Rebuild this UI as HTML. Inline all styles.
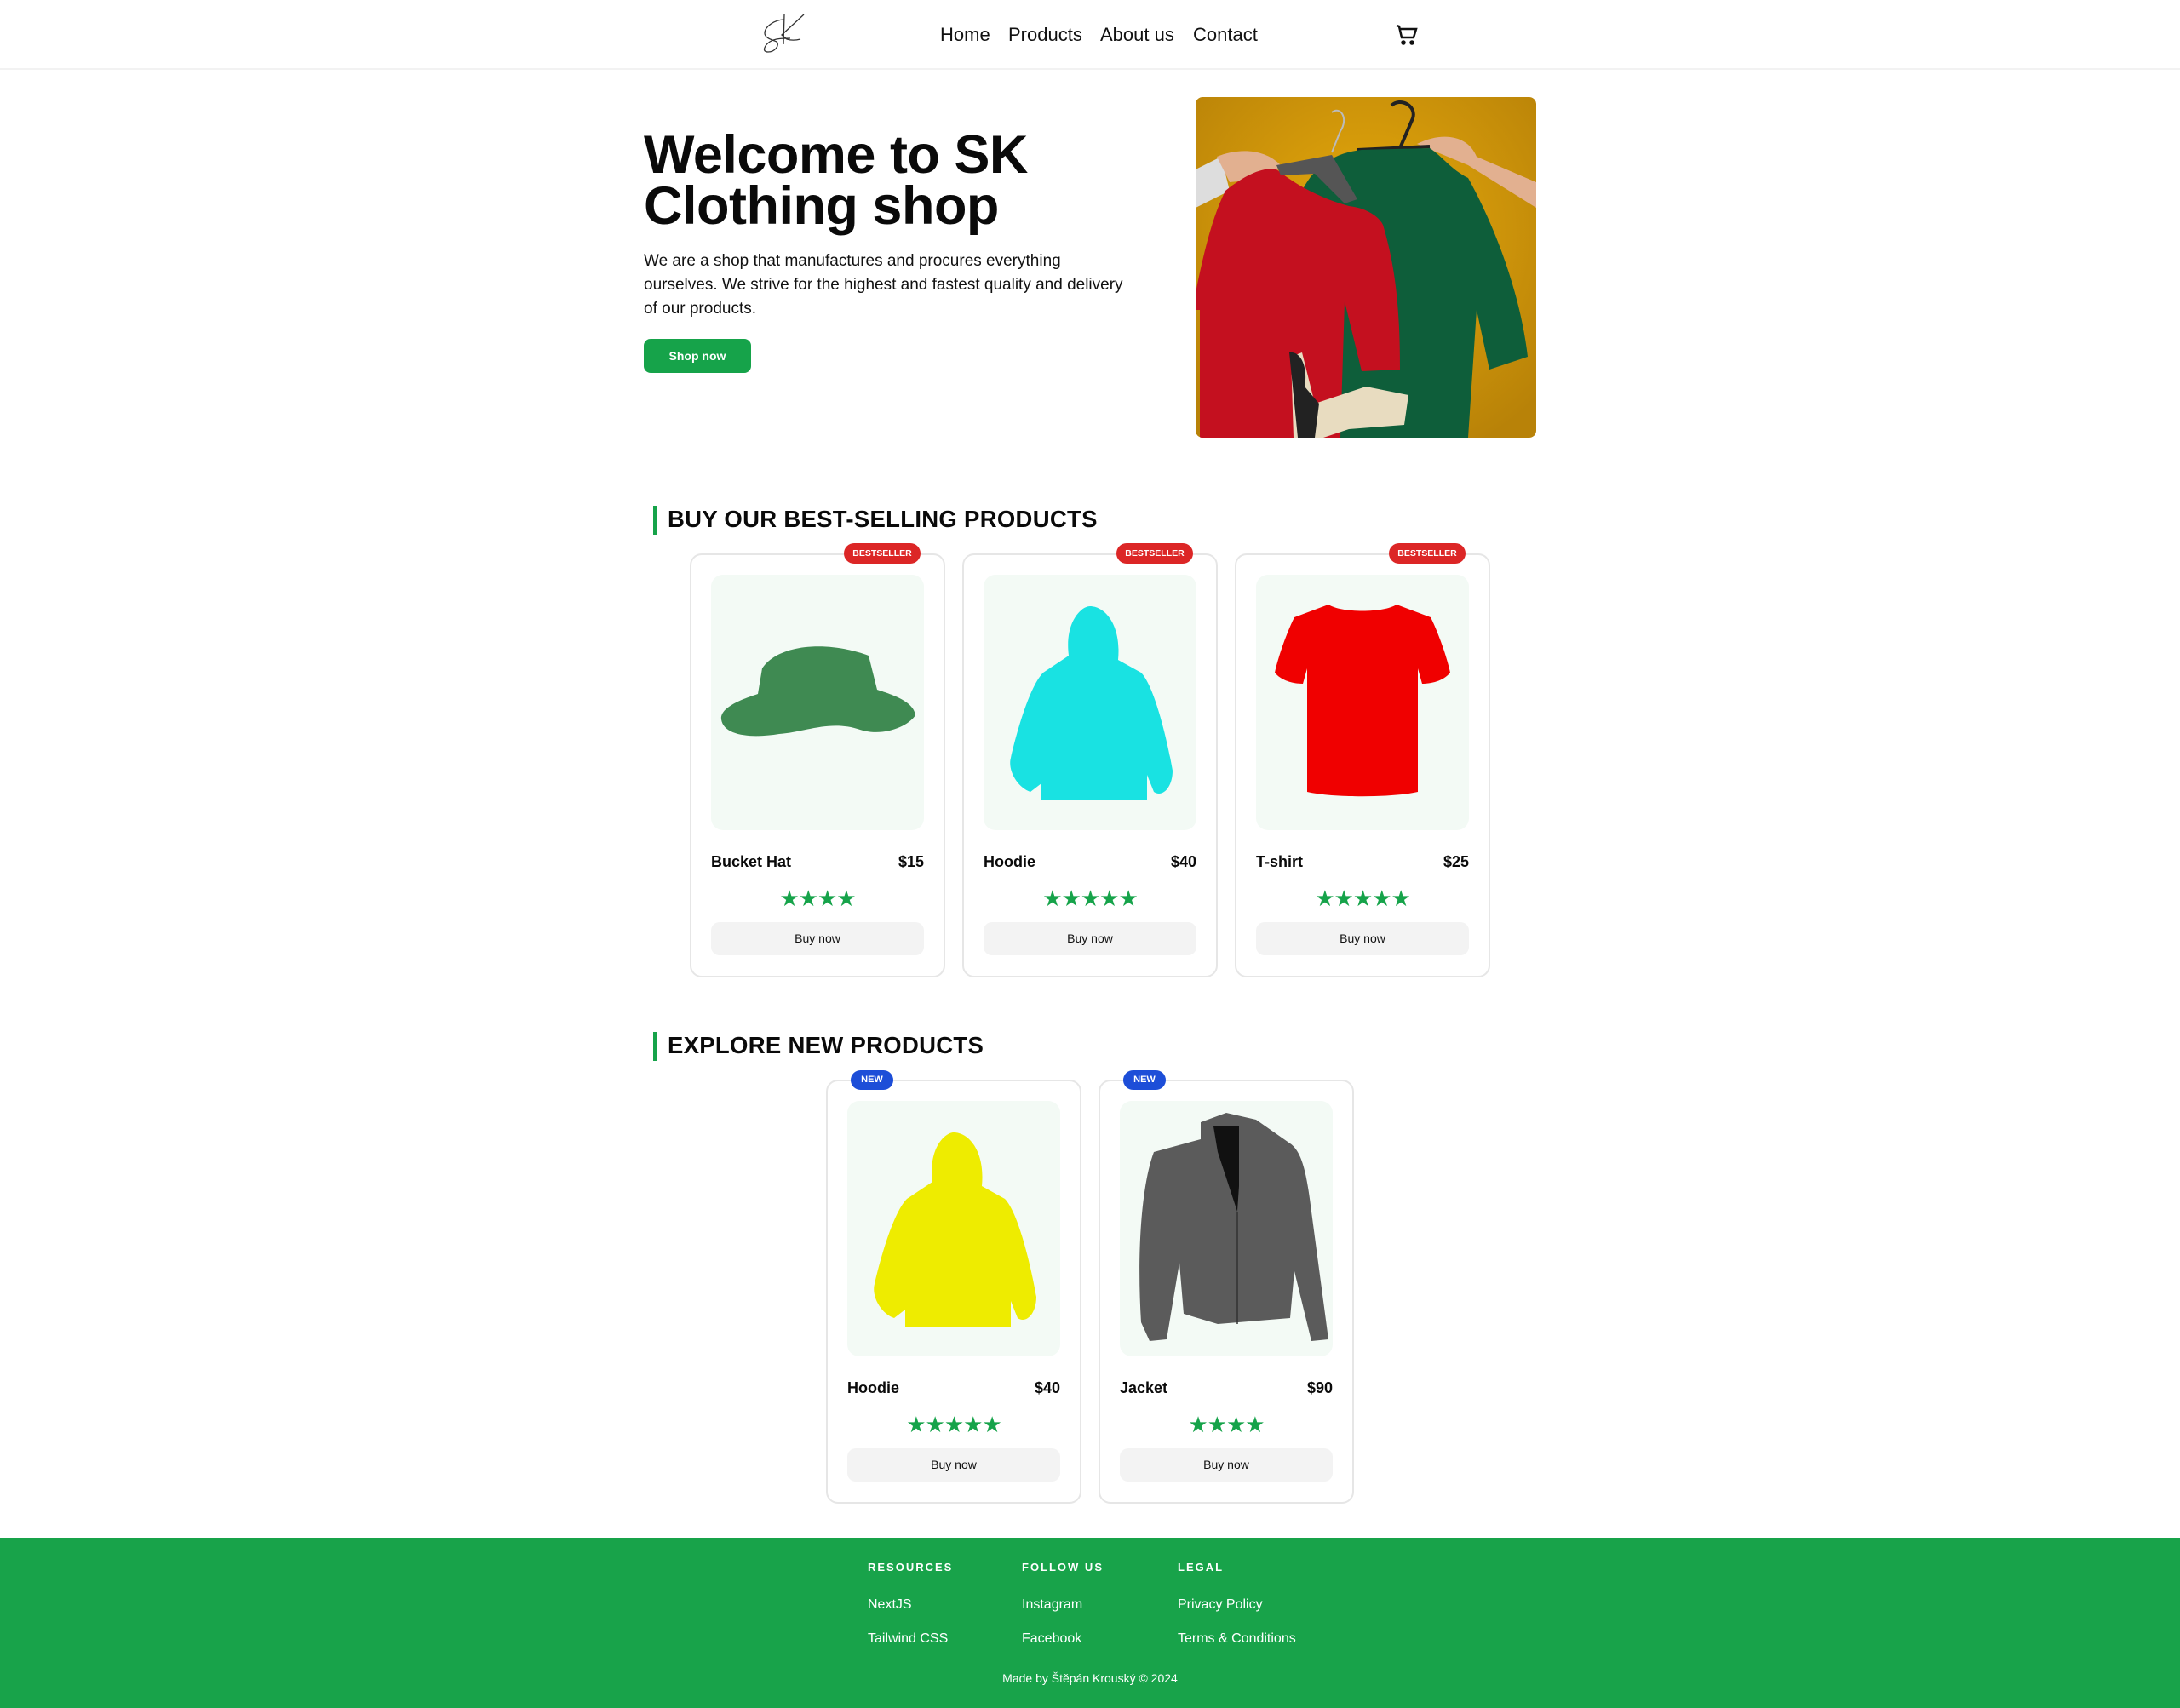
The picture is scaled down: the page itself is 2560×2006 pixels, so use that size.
<!DOCTYPE html>
<html><head><meta charset="utf-8">
<style>
*{margin:0;padding:0;box-sizing:border-box}
body{width:2560px;height:2006px;position:relative;background:#fff;font-family:"Liberation Sans",sans-serif;color:#0a0a0a;overflow:hidden}
.a{position:absolute}
.nav{left:0;top:0;width:2560px;height:82px;border-bottom:2px solid #f2f2f2}
.nl{top:28px;font-size:22px;color:#111}
h1{position:absolute;left:756px;top:152px;font-size:63px;line-height:60px;font-weight:700;letter-spacing:-0.5px}
.p{left:756px;top:293px;width:565px;font-size:19px;line-height:28px;color:#111}
.btn{left:756px;top:398px;width:126px;height:40px;background:#16a34a;border-radius:8px;color:#fff;font-size:14px;font-weight:700;text-align:center;line-height:40px}
.h2{font-size:27.5px;font-weight:700;letter-spacing:0.3px}
.bar{width:4px;height:34px;background:#16a34a}
.card{width:300px;height:498px;border:2px solid #e6e6e6;border-radius:14px;background:#fff}
.img{position:absolute;left:23px;top:23px;width:250px;height:300px;background:#f3faf5;border-radius:14px;overflow:hidden}
.nm{position:absolute;left:23px;top:350px;font-size:18px;font-weight:700}
.pr{position:absolute;right:23px;top:350px;font-size:18px;font-weight:700}
.st{position:absolute;left:0;width:296px;top:388px;text-align:center;color:#16a34a;font-size:26px;letter-spacing:-1px;line-height:30px}
.bn{position:absolute;left:23px;top:431px;width:250px;height:39px;background:#f3f3f3;border-radius:10px;text-align:center;line-height:39px;font-size:14px;color:#111}
.bs{top:-14px;right:27px;width:90px;height:24px;background:#dc2626;color:#fff;border-radius:12px;font-size:10.5px;font-weight:700;text-align:center;line-height:24px}
.nw{top:-13px;left:27px;width:50px;height:23px;background:#1d4ed8;color:#fff;border-radius:12px;font-size:11px;font-weight:700;text-align:center;line-height:23px}
.foot{left:0;top:1806px;width:2560px;height:200px;background:#18a34a;color:#fff}
.fh{font-size:13px;font-weight:700;letter-spacing:2px}
.fl{font-size:16px}
</style></head><body>
<div class="a nav"></div>
<svg class="a" style="left:880px;top:5px" width="80" height="70" viewBox="0 0 80 70" fill="none" stroke="#333" stroke-width="1.3">
<path d="M41 12 L40 47"/><path d="M64 12 L38 36 L44 41 C50 43 56 42 60 41"/>
<path d="M41 18 C30 18 18 26 18 34 C18 40 28 42 32 44 C36 48 30 56 22 56 C14 56 18 48 24 44 C30 40 40 40 48 40"/>
</svg>
<div class="a nl" style="left:1104px">Home</div>
<div class="a nl" style="left:1184px">Products</div>
<div class="a nl" style="left:1292px">About us</div>
<div class="a nl" style="left:1401px">Contact</div>
<svg class="a" style="left:1630px;top:20px" width="44" height="40" viewBox="1630 20 44 40" fill="none" stroke="#111" stroke-width="2.5">
<path d="M1640 30 L1643 31 L1646 44 L1660 44 L1663 34 L1644 34"/>
<circle cx="1648" cy="50" r="1.5" fill="#111"/><circle cx="1658" cy="50" r="1.5" fill="#111"/>
</svg>

<h1>Welcome to SK<br>Clothing shop</h1>
<div class="a p">We are a shop that manufactures and procures everything ourselves. We strive for the highest and fastest quality and delivery of our products.</div>
<div class="a btn">Shop now</div>

<svg class="a" style="left:1404px;top:114px;border-radius:8px" width="400" height="400" viewBox="0 0 400 400">
<defs><radialGradient id="bg" cx="0.5" cy="0.4" r="0.7"><stop offset="0" stop-color="#e7aa0c"/><stop offset="1" stop-color="#b88208"/></radialGradient></defs>
<rect width="400" height="400" rx="8" fill="url(#bg)"/>
<path d="M0 85 L30 70 L40 110 L0 130Z" fill="#ddd"/>
<path d="M260 55 C290 40 320 45 330 70 L400 100 L400 130 L320 80 Z" fill="#e2b090"/>
<path d="M25 70 C50 60 80 60 100 80 L90 95 L40 100Z" fill="#e2b090"/>
<path d="M230 10 C240 0 260 10 255 25 L240 60" stroke="#222" stroke-width="4" fill="none"/>
<path d="M190 62 L275 58" stroke="#222" stroke-width="4"/>
<path d="M160 18 C170 10 180 25 170 40 L160 65" stroke="#bbb" stroke-width="2" fill="none"/>
<path d="M125 110 C140 80 165 65 195 62 L275 60 C290 70 300 85 320 95 C345 140 380 220 390 305 L345 320 L330 250 L320 400 L150 400 Z" fill="#0e5e3a"/>
<path d="M35 110 C60 90 80 82 95 85 C120 105 150 120 180 128 C200 130 215 140 220 150 C235 200 240 250 240 320 L195 322 L175 240 L170 400 L5 400 L5 250 L0 250 L0 230 C10 180 20 140 35 110Z" fill="#c4101f"/>
<path d="M95 80 L160 68 L190 120 L175 125 L140 90 L100 92Z" fill="#555"/>
<path d="M112 305 L125 300 L140 360 L200 340 L250 350 L245 385 L180 390 L150 400 L115 400Z" fill="#e8dcc0"/>
<path d="M110 300 C125 298 132 320 128 340 L145 360 L140 400 L120 400 Z" fill="#222"/>
</svg>

<div class="a bar" style="left:767px;top:594px"></div>
<div class="a h2" style="left:784px;top:594px">BUY OUR BEST-SELLING PRODUCTS</div>

<div class="a card" style="left:810px;top:650px">
 <div class="a bs">BESTSELLER</div>
 <div class="img"><svg width="250" height="300" viewBox="0 0 250 300"><path d="M60 110 C80 80 140 78 185 95 L195 135 C210 140 238 148 240 165 C230 180 200 190 175 182 C140 170 110 185 80 187 C50 192 15 190 12 170 C10 155 40 145 55 140 Z" fill="#3f8a52"/></svg></div>
 <div class="nm">Bucket Hat</div><div class="pr">$15</div>
 <div class="st">★★★★</div>
 <div class="bn">Buy now</div>
</div>
<div class="a card" style="left:1130px;top:650px">
 <div class="a bs">BESTSELLER</div>
 <div class="img"><svg width="250" height="300" viewBox="0 0 250 300"><path d="M100 95 C95 55 115 37 125 37 C142 37 162 58 158 100 L185 115 C200 130 215 190 222 230 C222 250 210 262 200 255 L192 235 L192 265 L68 265 L68 245 L55 255 C40 250 28 230 32 215 C40 180 55 130 70 115 Z" fill="#19e2e2"/></svg></div>
 <div class="nm">Hoodie</div><div class="pr">$40</div>
 <div class="st">★★★★★</div>
 <div class="bn">Buy now</div>
</div>
<div class="a card" style="left:1450px;top:650px">
 <div class="a bs">BESTSELLER</div>
 <div class="img"><svg width="250" height="300" viewBox="0 0 250 300"><path d="M85 35 C100 45 150 45 165 35 L205 50 C215 70 225 100 228 115 C220 125 205 128 195 128 L190 110 L190 255 C160 262 90 262 60 255 L60 110 L55 128 C45 128 30 125 22 115 C25 100 35 70 45 50 Z" fill="#f00000"/></svg></div>
 <div class="nm">T-shirt</div><div class="pr">$25</div>
 <div class="st">★★★★★</div>
 <div class="bn">Buy now</div>
</div>

<div class="a bar" style="left:767px;top:1212px"></div>
<div class="a h2" style="left:784px;top:1212px">EXPLORE NEW PRODUCTS</div>

<div class="a card" style="left:970px;top:1268px">
 <div class="a nw">NEW</div>
 <div class="img"><svg width="250" height="300" viewBox="0 0 250 300"><path d="M100 95 C95 55 115 37 125 37 C142 37 162 58 158 100 L185 115 C200 130 215 190 222 230 C222 250 210 262 200 255 L192 235 L192 265 L68 265 L68 245 L55 255 C40 250 28 230 32 215 C40 180 55 130 70 115 Z" fill="#eeec00"/></svg></div>
 <div class="nm">Hoodie</div><div class="pr">$40</div>
 <div class="st">★★★★★</div>
 <div class="bn">Buy now</div>
</div>
<div class="a card" style="left:1290px;top:1268px">
 <div class="a nw">NEW</div>
 <div class="img"><svg width="250" height="300" viewBox="0 0 250 300"><path d="M95 25 L125 14 L160 22 L200 50 C215 60 220 90 225 130 L245 280 L225 282 L205 200 L200 255 L115 262 L75 250 L70 190 L55 280 L35 282 L25 260 C20 180 25 100 40 60 L95 45 Z" fill="#5b5b5b"/><path d="M110 30 L140 30 L140 100 L138 130 L115 60Z" fill="#111"/><path d="M138 130 L138 262" stroke="#333" stroke-width="1.5"/></svg></div>
 <div class="nm">Jacket</div><div class="pr">$90</div>
 <div class="st">★★★★</div>
 <div class="bn">Buy now</div>
</div>

<div class="a foot">
 <div class="a fh" style="left:1019px;top:27px">RESOURCES</div>
 <div class="a fh" style="left:1200px;top:27px">FOLLOW US</div>
 <div class="a fh" style="left:1383px;top:27px">LEGAL</div>
 <div class="a fl" style="left:1019px;top:70px">NextJS</div>
 <div class="a fl" style="left:1019px;top:110px">Tailwind CSS</div>
 <div class="a fl" style="left:1200px;top:70px">Instagram</div>
 <div class="a fl" style="left:1200px;top:110px">Facebook</div>
 <div class="a fl" style="left:1383px;top:70px">Privacy Policy</div>
 <div class="a fl" style="left:1383px;top:110px">Terms &amp; Conditions</div>
 <div class="a" style="left:0;width:2560px;text-align:center;top:157px;font-size:14px">Made by Štěpán Krouský © 2024</div>
</div>
</body></html>
